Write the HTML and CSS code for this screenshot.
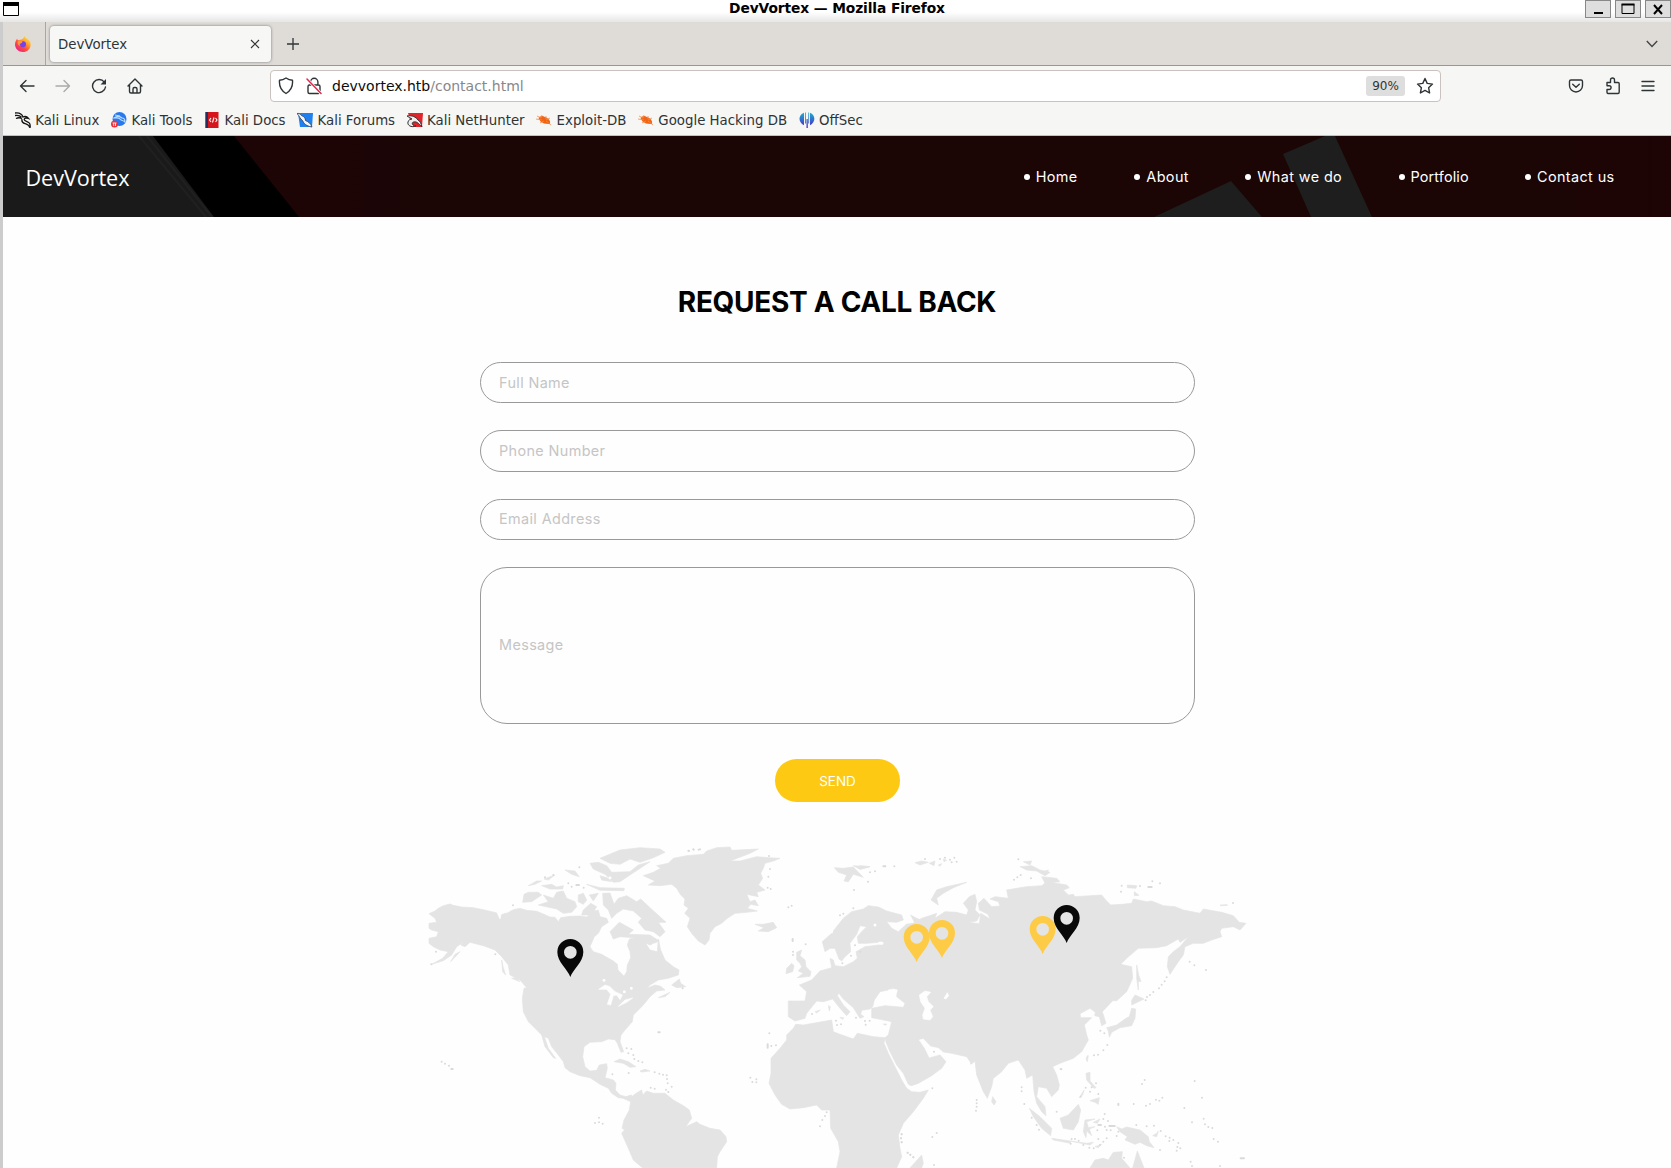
FILE: index.html
```html
<!DOCTYPE html>
<html lang="en">
<head>
<meta charset="utf-8">
<title>DevVortex</title>
<link rel="stylesheet" href="styles.css">
</head>
<body>
<div class="titlebar">
  <svg class="win-icon" width="16" height="14" viewBox="0 0 16 14"><path d="M.5.5h15v13H.5z" fill="#fff" stroke="#000"/><path d="M0 0h16v4H0z"/></svg>
  <span class="title">DevVortex — Mozilla Firefox</span>
  <div class="win-buttons">
    <span class="win-btn"><svg width="26" height="18"><path d="M9 13h9" stroke="#000" stroke-width="2"/></svg></span>
    <span class="win-btn"><svg width="26" height="18"><path d="M7 4.500h12v9H7z" fill="none" stroke="#000"/><path d="M6.500 4.500h13" stroke="#000" stroke-width="2"/></svg></span>
    <span class="win-btn"><svg width="26" height="18"><path d="M9 5l8 9M17 5l-8 9" stroke="#000" stroke-width="2"/></svg></span>
  </div>
</div>
<div class="window">
  <div class="tabs">
    <div class="pinned">
      <svg width="16" height="16" viewBox="0 0 16 16"><defs><linearGradient id="fx" x1="1" y1="0" x2=".2" y2="1"><stop offset="0" stop-color="#fff36b"/><stop offset=".35" stop-color="#ffb02e"/><stop offset=".65" stop-color="#ff4d3d"/><stop offset="1" stop-color="#e91e8c"/></linearGradient></defs><path d="M9.500 0c1 2 2.500 2.500 3.700 3.600C15 5 16 7 15.600 9.500 15 13.500 12 16 8 16 3.500 16 0 12.500 0 8.500 0 6 1 4.300 2.300 2.500c0 1 .3 1.500.7 1.800C4 3.700 5 3.600 6 3.800 7.500 3.500 8.700 2 9.500 0z" fill="url(#fx)"/><circle cx="8" cy="8.300" r="3" fill="#7542e5"/><path d="M3 5c2-1.500 3.500-.5 4.500 1L6 7.500C4.500 7 4 9 5.500 10 3 10 2 7 3 5z" fill="#ff9640"/></svg>
    </div>
    <div class="tab"><span>DevVortex</span><svg width="10" height="10"><path d="M1 1l8 8M9 1L1 9" stroke="#333" stroke-width="1.100"/></svg></div>
    <svg class="new-tab" width="12" height="12"><path d="M6 0v12M0 6h12" stroke="#2e3436" stroke-width="1.300"/></svg>
    <svg class="tab-list" width="12" height="8"><path d="M.8 1l5.200 5.500L11.200 1" fill="none" stroke="#444" stroke-width="1.400"/></svg>
  </div>
  <div class="toolbar">
    <div class="nav-icons">
      <svg width="16" height="16" viewBox="0 0 16 16"><path d="M15 8H1.500M7 2.500L1.500 8 7 13.500"/></svg>
      <svg class="off" width="16" height="16" viewBox="0 0 16 16"><path d="M1 8h13.500M9 2.500L14.500 8 9 13.500"/></svg>
      <svg width="16" height="16" viewBox="0 0 16 16"><path d="M13.300 4.200A6.500 6.500 0 1 0 14.500 9"/><path d="M9.500 6.500H15V1z" fill="#2e3436" stroke="none"/></svg>
      <svg width="16" height="16" viewBox="0 0 16 16"><path d="M1 8l7-7 7 7M2.500 7v6.500q0 1.500 1.500 1.500h8q1.500 0 1.500-1.500V7M6 15v-4q0-1.500 1.500-1.500h1Q10 9.500 10 11v4"/></svg>
    </div>
    <div class="urlbar">
      <svg width="16" height="18" viewBox="0 0 16 18"><path d="M8 1q3 2 6.500 2.300.8 9-6.500 13.200Q.7 12.300 1.500 3.300 5 3 8 1z"/></svg>
      <svg class="lock" width="16" height="18" viewBox="0 0 16 18"><path d="M4.500 8V5a3.700 3.700 0 0 1 7.400 0v3M3.500 8h9q1.500 0 1.500 1.500V15q0 1.500-1.500 1.500h-9Q2 16.500 2 15V9.500Q2 8 3.500 8z"/><path d="M1 2l14 14.500" stroke="#fff" stroke-width="3"/><path d="M1 2l14 14.500" stroke="#e22850" stroke-width="1.500"/></svg>
      <span class="url">devvortex.htb<span>/contact.html</span></span>
      <span class="zoom">90%</span>
      <svg class="star" width="18" height="18" viewBox="0 0 18 18"><path d="M9 1.500l2.200 4.900 5.300.7-3.900 3.600 1 5.300L9 13.400 4.400 16l1-5.300L1.500 7.100l5.300-.7z"/></svg>
    </div>
    <div class="tools">
      <svg width="16" height="16" viewBox="0 0 16 16"><path d="M3 2h10q1.500 0 1.500 1.500V7.500a6.500 6.500 0 0 1-13 0V3.500Q1.500 2 3 2zM4.700 6.200L8 9.300l3.300-3.100"/></svg>
      <svg width="16" height="18" viewBox="0 0 16 18"><path d="M2 5.500h3.500V3a2 2 0 0 1 4 0v2.500H13q1.200 0 1.200 1.200V15q0 1.500-1.200 1.500H3Q2 16.500 2 15v-2.500h2.200a1.900 1.900 0 0 0 0-3.800H2z"/></svg>
      <svg width="14" height="14" viewBox="0 0 14 14"><path d="M1 2.500h12M1 7h12M1 11.500h12"/></svg>
    </div>
  </div>
  <div class="bookmarks">
    <span class="mark"><svg width="16" height="16" viewBox="0 0 16 16"><path d="M0 1c4-.5 7 1 8 4 2-1 4-.5 5.500 1.500-2-.8-4-.7-4.300.8-.2 2 3.500 1.700 5 3.600 1 1.200 1.200 3 .8 5-1-3.500-2.500-3.500-5-4.300C7.500 11 6.500 9.500 7 7M0 3.500c3-.5 5 0 6.500 1.700M1 6.500c2-1 4-1 6 0" fill="none" stroke="#151515" stroke-width="1.300"/></svg>Kali Linux</span>
    <span class="mark"><svg width="16" height="16" viewBox="0 0 16 16"><circle cx="8.500" cy="7" r="7" fill="#2879ee"/><path d="M3 6c4-3 6-2 8 0 2 0 3 2 3 4-2-2-4-1-5-3-1-1.500-3-1-6-1zM4 3l5 1" fill="none" stroke="#b9dcff" stroke-width="1.200"/><circle cx="3.500" cy="12" r="3.500" fill="#ee3039"/><path d="M1.500 11h4M2.700 11v3M4.500 11v3" stroke="#fff" stroke-width=".8"/></svg>Kali Tools</span>
    <span class="mark"><svg width="16" height="16" viewBox="-1.500 0 16 16"><path d="M0 0h13v16H0z" fill="#d5161c"/><path d="M0 0h2.500v16H0z" fill="#26305c"/><path d="M5.500 6L4 8l1.500 2M10 6l1.500 2L10 10M8.500 5.500L7 10.500" fill="none" stroke="#fff" stroke-width="1.100"/></svg>Kali Docs</span>
    <span class="mark"><svg width="16" height="16" viewBox="0 0 16 16"><path d="M1 1h15l-1 14H3z" fill="#2080ef"/><path d="M0 1.500C2 1 3 2 4.500 3.500 7 4.500 8.500 6 8.500 8.500c2.500 1 5.500 3 6.500 6.500-2-.5-3.500-.5-5-1.500-2-1-3.500-2.500-4.500-5C3 7 2.500 4 0 1.500z" fill="#f4f4f4" stroke="#34495e" stroke-width=".9"/></svg>Kali Forums</span>
    <span class="mark"><svg width="16" height="16" viewBox="0 0 16 16"><path d="M1 1h15l-1 14H5z" fill="#e3232c"/><path d="M0 4c5-1 9 1 11 4 2 1 3 3 4 7-2-2-5-6-8-5-3 0-2 4 2 4-5 2-9-1-8-4 0-2 3-3 4-3-2-1-3-2-5-3z" fill="#eee" stroke="#333" stroke-width="1"/></svg>Kali NetHunter</span>
    <span class="mark"><svg width="16" height="16" viewBox="0 0 16 16"><path d="M2.500 6q2.500-3.500 6.500-1 6 2 5 7-6 .5-9.500-2.500z" fill="#f06513"/><path d="M1 4l4 2 1-3M0 7l6 1M4 11l4-2M10 4v3M14 6l-4 2M15 13l-5-4" fill="none" stroke="#f28a4c" stroke-width=".8"/></svg>Exploit-DB</span>
    <span class="mark"><svg width="16" height="16" viewBox="0 0 16 16"><path d="M2.500 6q2.500-3.500 6.500-1 6 2 5 7-6 .5-9.500-2.500z" fill="#f06513"/><path d="M1 4l4 2 1-3M0 7l6 1M4 11l4-2M10 4v3M14 6l-4 2M15 13l-5-4" fill="none" stroke="#f28a4c" stroke-width=".8"/></svg>Google Hacking DB</span>
    <span class="mark"><svg width="16" height="16" viewBox="0 0 16 16"><defs><linearGradient id="os" gradientUnits="userSpaceOnUse" x1="0" y1="0" x2="0" y2="16"><stop stop-color="#19b4cf"/><stop offset="1" stop-color="#5020c8"/></linearGradient></defs><path d="M5 .8v12.500C-1.200 10 -.8 3 5 .8zM6 .4h.8v11H6zM7.500 7h1.300v9H7.500zM9.300.4h.8v11h-.8zM11 .8v12.500c6-3.300 5.600-10.300 0-12.500z" fill="url(#os)"/></svg>OffSec</span>
  </div>
  <header class="site-header">
    <svg class="backdrop" width="1668" height="81" viewBox="3 136 1668 81">
      <defs><linearGradient id="red"><stop offset=".14" stop-color="#1e0406"/><stop offset=".25" stop-color="#1b0505"/><stop offset=".92" stop-color="#1b0605"/><stop offset="1" stop-color="#1e0404"/></linearGradient></defs>
      <path d="M0 136h1671v81H0z" fill="url(#red)"/>
      <path d="M0 136h234l65 81H0z" fill="#000"/>
      <path d="M0 136h153l61 81H0z" fill="#1a1a1a"/>
      <path d="M139 136l67 81M147 136l65 81" stroke="#202020" stroke-width="2"/>
      <path d="M1154 217l77-36 31 36zM1283 154l42-18h10l37 81h-61z" fill="#1d1e1d"/>
    </svg>
    <a class="logo">DevVortex</a>
    <nav class="menu">
      <a class="m-home">Home</a><a class="m-about">About</a><a class="m-what">What we do</a><a class="m-port">Portfolio</a><a class="m-contact">Contact us</a>
    </nav>
  </header>
  <main class="contact">
    <h2>REQUEST A CALL BACK</h2>
    <form class="form">
      <div class="field">Full Name</div>
      <div class="field tall">Phone Number</div>
      <div class="field">Email Address</div>
      <div class="field message">Message</div>
      <div class="send">SEND</div>
    </form>
    <svg class="map" width="850" height="333" viewBox="0 0 2550 999">
      <defs><path id="pin" fill-rule="evenodd" d="M39 114C32 92 0 70 0 39A39 39 0 0 1 78 39C78 70 46 92 39 114zM39 21a19 19 0 1 0 0 38 19 19 0 1 0 0-38z"/></defs>
      <!-- the Americas -->
      <g>
        <path class="land" d="M27 236L45 228 55 220 70 212 90 207 100 211 125 216 160 218 190 224 232 234 240 250 243 238 262 234 280 224 300 220 320 226 350 229 368 236 390 246 405 247 415 260 422 248 450 244 480 243 500 246 512 236 522 228 535 226 540 245 560 250 565 262 545 275 535 295 523 305 510 335 520 350 545 358 580 378 592 388 594 405 612 424 620 410 622 390 632 368 630 350 622 330 628 312 650 308 675 322 690 345 712 350 715 312 722 345 735 375 760 395 777 405 775 420 745 430 715 435 690 450 680 460 705 450 722 454 735 465 710 468 690 485 678 500 665 515 650 530 640 540 637 560 615 585 603 600 600 620 611 650 603 652 592 625 585 614 565 612 545 620 510 622 492 635 488 665 495 695 510 708 530 706 538 690 560 686 562 700 555 728 580 735 588 745 586 765 600 780 618 785 635 780 632 795 610 790 595 788 575 775 565 760 540 748 510 728 480 722 450 710 435 698 430 680 415 660 395 635 385 610 373 605 385 640 407 670 400 668 375 635 365 600 345 580 325 560 310 530 307 490 312 460 320 458 300 435 270 420 265 390 245 365 225 345 190 332 150 322 135 335 122 330 132 320 110 335 95 360 70 377 35 388 68 370 85 350 60 345 40 335 27 325 27 310 50 305 55 290 35 285 27 280 27 265 50 262 45 250z"/>
        <path class="land" d="M548 175L570 174 582 208 595 190 620 182 650 200 662 192 690 218 725 250 738 262 715 262 735 290 720 305 700 290 675 285 655 262 665 250 640 228 610 222 590 235 575 250 565 225 550 210zM540 70L600 45 660 38 720 42 735 52 700 68 660 82 630 72 600 88 570 85 550 75zM510 85L535 82 560 92 575 112 630 110 655 90 690 80 630 120 600 140 580 142 555 118 520 102zM500 148L540 158 613 160 612 167 540 166zM540 122L565 130 575 140 545 135zM312 178L325 172 355 172 365 180 335 200 308 202zM355 210L385 200 370 180 400 190 410 172 430 168 440 190 465 200 470 215 455 232 430 235 410 222zM475 180L490 175 500 195 490 208 475 200zM508 180L535 175 520 198zM325 152L350 138 365 138 345 148zM365 152L395 148 410 156 430 152 428 162 390 162zM435 105L465 108 478 125 455 118zM372 132L405 120 385 135zM490 225L512 205 530 215 515 240 485 240zM570 290L598 262 640 285 625 298 690 300 718 318 690 330 640 308 600 305 580 312zM755 450L778 432 782 445 797 455 770 458zM715 488L750 472 735 485zM582 680L600 672 625 680 648 695 630 697 610 685zM660 708L675 703 690 708 665 711zM92 380L105 358 120 350 102 370zM245 375L249 395 257 420 248 410zM275 430L290 428 300 440z"/>
        <path class="sea" d="M536 463L555 450 570 455 585 470 607 480 600 494 590 480 580 482 572 510 562 508 572 478 560 463zM595 514L615 495 638 489 620 502zM230 230L246 232 262 222 258 230 243 238 240 252z"/>
        <path class="land" d="M635 785L648 775 665 765 668 780 680 768 700 775 735 775 760 795 790 812 808 825 815 850 797 875 830 860 840 868 870 880 900 885 918 905 920 920 900 950 892 965 890 999 668 999 640 975 625 940 605 895 614 884 606 880 612 855 628 825 632 800 610 790 630 782z"/>
        <path class="dots" d="M65 680h0M75 686h0M87 692h0M94 702h4M48 350h0M34 388h0M226 358h0M279 211h0M537 848h0M525 864h0M537 862h0M548 866h0M715 592h4M620 640h0M634 642h0M625 655h0M640 660h0M643 672h0M655 678h0M667 682h0M577 718h0M626 714h0M704 712h0M718 716h0M729 719h0M740 721h0M741 732h0M743 745h0M738 764h0M745 771h0M755 755h0M692 758h0M704 761h0M445 145h0M455 155h0M469 150h8M491 158h0M375 127h0M400 120h0M478 97h0M805 47h0M820 43h0M836 44h0M788 460h0"/>
        <path class="sea-dots" d="M552 436h0M611 375h0M613 470h0M634 460h0M619 232h0M640 242h0M700 330h0M605 95h22M570 128h0"/>
      </g>
      <!-- Greenland, western Europe and Africa -->
      <g transform="translate(660)">
        <path class="land" d="M10 122L40 112 62 100 50 92 85 85 100 70 140 62 190 58 200 48 230 38 270 36 275 46 355 42 330 55 270 78 300 78 350 65 385 68 420 70 400 78 375 85 370 100 362 115 368 130 355 150 375 165 350 172 355 185 320 178 330 200 345 195 355 212 332 208 322 220 352 228 320 232 285 235 262 250 245 265 225 275 210 295 207 315 195 330 175 318 155 295 142 275 150 250 134 235 145 220 132 210 135 192 122 180 110 160 95 148 60 152 25 150 45 138zM345 268L370 268 400 262 410 278 385 290 355 288 372 278zM470 352L485 345 480 362 495 375 498 395 513 410 510 424 472 428 490 415 475 408 485 395 480 385 470 375zM440 400L455 385 462 392 458 410 438 416zM583 98L610 100 640 96 670 127 640 118 625 140 612 138 620 120 595 112zM640 92L690 95 660 103z"/>
        <path class="land" d="M547 320L575 295 590 275 610 250 635 230 670 222 685 212 715 216 740 228 785 240 790 255 770 262 740 260 755 280 775 290 800 267 825 265 812 240 830 250 860 262 860 600 835 605 835 744 815 752 805 748 790 715 770 690 750 650 738 622 735 608 745 600 755 560 720 553 695 548 695 520 735 512 790 517 795 505 770 485 772 465 745 465 720 470 703 495 698 515 690 522 665 526 662 538 672 545 660 550 640 518 610 492 597 475 592 482 610 510 630 530 620 542 600 520 578 492 550 500 530 498 520 510 500 535 495 550 465 558 445 545 445 498 495 498 500 470 478 450 515 435 540 408 575 398 570 370 580 375 585 392 610 395 640 380 652 370 648 350 675 335 715 330 718 322 680 325 655 325 652 305 665 290 680 275 660 272 650 298 630 325 632 350 615 365 605 378 597 372 585 340 570 340 555 350z"/>
        <path class="sea" d="M745 465L760 462 772 465 768 476 758 480 748 474z"/>
        <path class="land" d="M467 568L490 570 575 555 580 590 600 598 640 612 652 595 700 605 735 608 732 625 745 655 765 695 785 735 800 760 815 770 840 772 865 765 850 790 820 830 790 865 775 900 780 940 785 965 770 999 590 999 600 950 595 920 572 880 570 825 545 825 530 810 490 818 450 822 425 808 405 780 387 745 393 715 393 670 420 640 440 615 440 600 460 580z"/>
        <path class="land" d="M600 547L612 549 606 553zM525 530L541 525 530 534zM565 512L571 515 568 528zM730 567h10l-4 4zM725 319L731 325 722 330z"/>
        <path class="sea-dots" d="M718 325h8M575 290h0M588 380h0M705 270h0"/>
        <path class="dots" d="M147 48h0M161 44h0M180 43h0M387 63h0M390 102h0M385 125h0M383 158h0M392 162h0M445 217h0M455 212h0M458 312v6M459 350h0M459 360h0M497 328h0M600 241h0M610 236h0M640 220h0M642 165h0M684 140h0M690 112h0M705 109h0M730 94h6M763 94h0M388 595h0M383 628v10M394 633h0M408 631h0M331 728h0M337 741h0M349 733h0M349 742h0M560 832h0M555 843h0M547 855h0M540 874h0M785 898h0M783 910h0M785 922h0M803 953h0M811 959h0M820 967h0M516 537h0M588 557h0M591 570h0M603 568h0M648 548h0M675 558h0M677 569h0M689 557h0M645 331h0M661 350h0M633 362h0M607 385h0"/>
      </g>
      <!-- Asia and Oceania -->
      <g transform="translate(1320)">
        <path class="land" d="M125 290L150 275 152 268 165 262 185 250 215 240 230 235 225 250 255 230 290 232 320 240 325 225 310 205 328 185 345 178 350 200 345 225 360 240 350 258 325 262 358 266 362 235 390 252 384 238 358 225 355 205 372 190 395 215 420 213 415 200 390 192 405 185 445 190 440 165 470 160 500 155 545 152 560 140 620 150 628 158 610 165 625 180 580 188 640 178 645 185 725 180 737 195 752 210 785 208 815 205 820 192 860 200 875 198 910 212 945 215 970 225 1020 235 1030 222 1085 232 1120 242 1138 262 1158 265 1140 285 1120 275 1085 280 1080 290 1085 305 1055 315 1030 325 1000 325 975 335 970 360 955 380 930 418 922 395 925 365 940 350 960 335 985 305 960 322 955 312 920 332 890 338 835 340 800 370 782 388 815 395 818 430 800 470 770 497 758 497 727 530 738 565 725 572 718 545 704 542 706 532 690 520 660 536 662 548 695 548 673 570 680 600 685 615 665 650 640 670 600 685 578 695 590 720 598 750 595 765 575 785 560 760 535 755 530 785 555 815 558 842 545 830 530 805 522 770 518 720 500 730 495 705 475 675 445 685 425 710 400 730 395 755 382 790 370 770 350 720 345 678 335 687 320 665 275 655 245 650 258 680 245 700 215 722 175 745 150 751 125 690 125 540 155 510 125 445z"/>
        <path class="sea" d="M178 615L190 612 212 635 235 640 247 650 262 682 240 658 208 667 195 640zM178 480L195 468 212 472 200 485 205 500 220 515 210 525 218 545 210 555 190 552 188 540 195 520 182 500zM252 490L262 473 266 482 258 492z"/>
        <path class="land" d="M213 195L230 165 260 155 320 142 280 158 250 175 230 190 235 210zM480 95L515 92 540 105 570 112 555 122 530 108 500 105zM490 80L515 78 510 90zM545 125L590 130 600 140 555 145zM0 92L30 95 0 103zM165 83L185 78 205 82 180 90zM208 85L225 78 222 92zM235 90L245 86 240 94zM250 72L260 76 252 80zM600 850L625 840 655 808 662 825 655 860 640 885 610 880zM508 820L540 845 575 880 572 902 545 880 520 845zM575 910L630 918 632 925 580 915zM398 785L408 800 402 810 395 800zM150 999L185 960 190 985 185 999zM700 862L720 852 712 865zM330 672L340 680 332 688z"/>
        <path class="dots" d="M255 68h0M270 74h0M283 68h0M275 82h0M290 80h0M195 72h0M240 72h0M475 73h0M472 127h0M482 120h0M462 134h0M513 130h0M350 795h0M350 805h0M350 815h0M348 827h0M485 757h0M485 769h0M493 807h0M230 894h0M217 906h0M222 990h0M125 898h0M123 910h0M125 922h0M143 953h0M151 959h0M160 967h0M217 760h0M222 650h0M515 848h0M530 870h0M537 884h0M590 830h0M602 702h0"/>
      </g>
      <g transform="translate(1860)">
        <path class="land" d="M275 520L287 522 285 550 275 572 240 578 215 592 208 607 205 588 200 578 230 570 258 550 268 545zM285 480L312 492 275 510 275 496zM290 390L296 420 303 440 295 438 295 465 290 430zM262 150L290 152 288 160 262 158zM283 170L297 181 283 182zM2 112L25 105 20 118zM138 715L150 712 150 738 168 758 162 760 140 735zM150 797L178 788 175 808 165 802zM135 855L165 852 140 860 145 878 165 875 148 882 155 902 140 888 138 908 130 890zM118 788L132 765 128 780zM142 662L145 662 142 680 138 672zM165 935L185 928 175 938zM90 918L140 925 160 922 150 930zM230 875L245 882 260 876 300 885 325 905 328 920 342 938 320 932 300 922 285 928 255 915 262 905 240 890zM338 902L350 895 355 888 350 905zM150 999L165 975 190 970 205 975 220 952 247 950 245 970 270 999zM278 999L292 948 312 999zM540 210L562 209 562 211 542 212z"/>
        <path class="dots" d="M245 152h0M243 170h0M300 153h0M325 156h10M337 139h0M360 145h0M579 204h0M449 380h0M463 391h0M498 405h0M380 427h0M374 439h0M365 449h0M357 460h0M340 471h0M330 480h0M321 486h0M317 496h0M181 587h0M193 595h0M202 630h0M190 646h0M174 659h0M162 661h0M64 703h0M314 735h0M306 747h0M464 738h0M486 788h0M433 819h0M456 862h0M491 851h0M495 868h0M505 876h0M517 879h0M521 912h0M534 920h0M281 807h0M318 812h0M330 807h0M348 794h0M358 797h0M367 788h0M235 806v4M168 745h0M155 757h0M137 758h0M150 770h0M175 777h0M122 785h0M194 837h0M190 852h0M204 858h0M175 870h8M195 875h0M208 873h16M212 886h0M200 885h0M235 890h0M289 870h0M320 874h0M342 872h0M362 888h0M377 904h0M389 908h0M400 915h0M388 918h0M415 924h0M412 936h0M421 940h0M410 947h0M360 945h0M252 968h0M95 912h0M105 912h0M116 917h0M92 926h0M130 930h0M148 938h0M161 940h0M175 912h0M200 910h0M230 903h0M180 930h0M190 920h0M602 970h10M540 993h0M452 980h0M456 993h0M172 886h0"/>
      </g>
      <use class="pin-black" href="#pin" x="412" y="312"/>
      <use class="pin-gold" href="#pin" x="1451" y="267"/>
      <use class="pin-gold" href="#pin" x="1527" y="255"/>
      <use class="pin-gold" href="#pin" x="1829" y="243"/>
      <use class="pin-black" href="#pin" x="1901" y="210"/>
    </svg>
  </main>
</div>
</body>
</html>
```
FILE: styles.css
```css
* { box-sizing: border-box; }
body { margin: 0; height: 1168px; overflow: hidden; background: #fff; font-family: "DejaVu Sans", sans-serif; font-size: 13.33px; color: #2e3436; }
svg { display: block; flex: none; }
.titlebar { height: 22px; display: flex; align-items: flex-start; background: linear-gradient(#fff 55%, #e6e6e6); }
.win-icon { margin: 2px 0 0 3px; }
.title { flex: 1; margin-left: 70px; text-align: center; font-weight: bold; font-size: 13.8px; line-height: 17px; letter-spacing: -.1px; color: #000; }
.win-buttons { display: flex; gap: 4px; }
.win-btn { width: 26px; height: 18px; background: #dedede; outline: 1px solid #888; outline-offset: -1px; }
.window { height: 1146px; border-left: 3px solid #ccc; }
.tabs { height: 44px; display: flex; align-items: center; background: #dfdcd8; border-bottom: 1px solid #9c9693; }
.pinned { width: 43px; height: 43px; border-right: 1px solid #aaa5a1; display: flex; align-items: center; padding-left: 12px; }
.tab { width: 221px; height: 36px; margin-left: 4px; padding: 1px 11px 0 8px; display: flex; align-items: center; justify-content: space-between; border-radius: 4px; background: #f7f7f6; box-shadow: 0 0 3px #777; }
.new-tab { margin-left: 16px; }
.tab-list { margin-left: auto; margin-right: 13px; }
.toolbar { height: 40px; display: flex; align-items: center; background: #f6f6f5; }
.toolbar svg { fill: none; stroke: #2e3436; stroke-width: 1.4; stroke-linecap: round; stroke-linejoin: round; }
.nav-icons { display: flex; gap: 20px; padding-left: 15.5px; width: 267px; }
.nav-icons .off { stroke: #aaa; }
.urlbar { width: 1171px; height: 32px; padding-left: 7px; display: flex; align-items: center; background: #fff; border: 1px solid #c9c2be; border-radius: 4px; }
.lock { margin-left: 12px; }
.url { margin-left: 10px; flex: 1; font-size: 14px; color: #0c0c0c; }
.url span { color: #888; }
.zoom { width: 39px; height: 20px; border-radius: 3px; background: #dedede; font-size: 12px; line-height: 20px; text-align: center; }
.star { margin: 0 6px 0 11px; }
.tools { margin-left: auto; margin-right: 16px; display: flex; align-items: center; gap: 20.5px; }
.bookmarks { height: 30px; padding-left: 12px; padding-bottom: 1px; display: flex; align-items: center; gap: 11.8px; background: #f6f6f5; border-bottom: 1px solid #c4c0bd; white-space: nowrap; }
.mark { display: flex; align-items: center; gap: 4.2px; }
.site-header { position: relative; height: 81px; display: flex; align-items: center; justify-content: space-between; padding: 0 56px 0 22.5px; color: #fff; }
.backdrop { position: absolute; left: 0; top: 0; }
.logo { position: relative; font: 21.6px "Open Sans", sans-serif; letter-spacing: -.05px; padding-top: 1px; }
.menu { position: relative; display: flex; gap: 56.3px; font: 14.4px Inter, sans-serif; letter-spacing: .4px; white-space: nowrap; }
.menu a { display: flex; align-items: center; gap: 6px; }
.menu a::before { content: ""; flex: none; width: 6px; height: 6px; border-radius: 3px; background: #fff; }
.m-home { width: 54.4px; } .m-about { width: 54.6px; } .m-what { width: 97px; } .m-port { width: 70.2px; letter-spacing: .15px; } .m-contact { width: 90px; }
.contact { padding-top: 64px; background: #fefefe; }
h2 { margin: 0; height: 42px; text-align: center; font: bold 28px/43px Inter, sans-serif; letter-spacing: -.3px; color: #000; }
.form { width: 715px; margin: 39px 0 0 477px; display: flex; flex-direction: column; gap: 27px; font: 14.4px Inter, sans-serif; letter-spacing: .38px; }
.field { height: 41px; padding: 0 0 2px 18px; display: flex; align-items: center; border: 1px solid #999; border-radius: 20.5px; color: #c5c5c5; }
.field:first-child { padding-bottom: 0; }
.tall { height: 42px; border-radius: 21px; }
.message { height: 157px; border-radius: 27px; }
.send { align-self: center; width: 125px; height: 43px; margin-top: 8px; border-radius: 22px; background: #fdc913; color: #fff; text-align: center; font-size: 13.5px; letter-spacing: 0; line-height: 44px; }
.map { margin: 33px 0 0 417px; }
.land { fill: #e4e4e4; stroke: #e4e4e4; stroke-width: 2; stroke-linejoin: round; }
.sea { fill: #fefefe; stroke: #fefefe; stroke-width: 2; stroke-linejoin: round; }
.dots { fill: none; stroke: #dadada; stroke-width: 6; stroke-linecap: round; }
.sea-dots { fill: none; stroke: #fefefe; stroke-width: 9; stroke-linecap: round; }
.pin-black { fill: #080808; }
.pin-gold { fill: #fecb46; }
```
